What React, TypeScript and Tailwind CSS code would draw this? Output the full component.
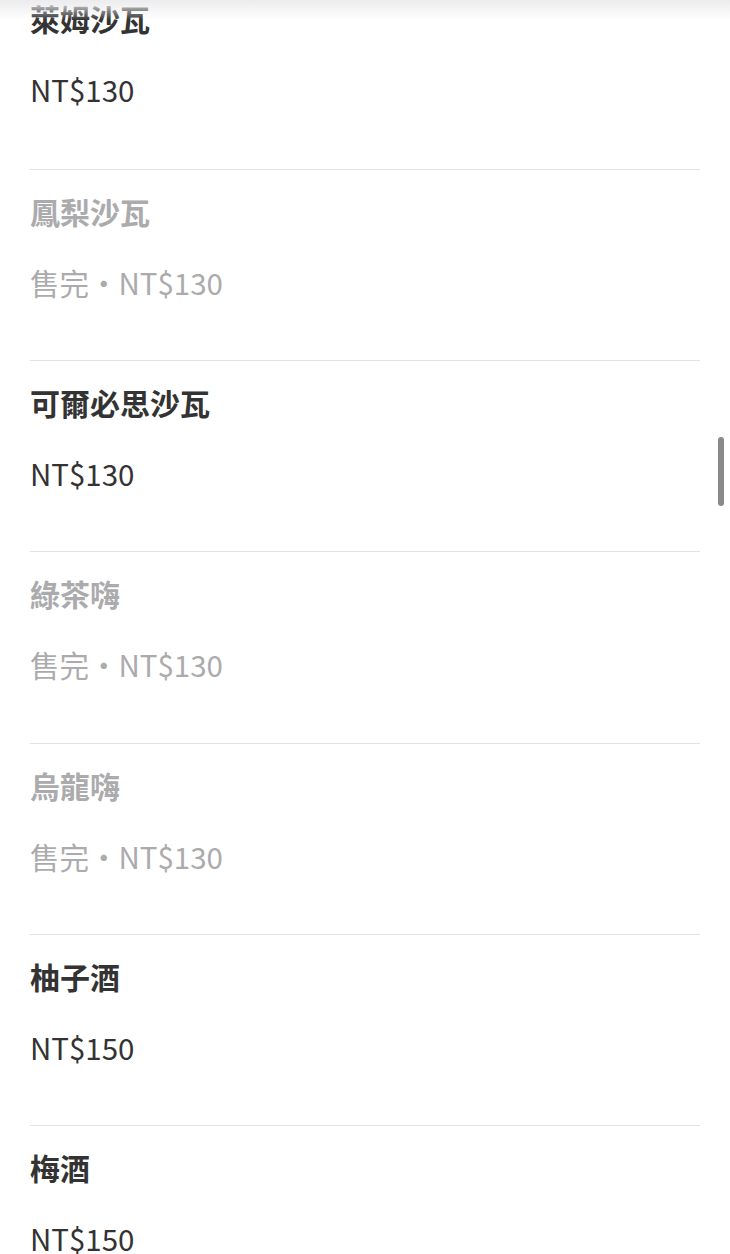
const items = [
  { name: "萊姆沙瓦", price: "NT$130", soldOut: false },
  { name: "鳳梨沙瓦", price: "NT$130", soldOut: true },
  { name: "可爾必思沙瓦", price: "NT$130", soldOut: false },
  { name: "綠茶嗨", price: "NT$130", soldOut: true },
  { name: "烏龍嗨", price: "NT$130", soldOut: true },
  { name: "柚子酒", price: "NT$150", soldOut: false },
  { name: "梅酒", price: "NT$150", soldOut: false },
]

export default function App() {
  return (
    <div className="relative h-[1254px] w-[730px] overflow-hidden bg-white font-['Noto_Sans_CJK_TC','Noto_Sans',sans-serif]">
      {/* shadow left by the header above */}
      <div className="pointer-events-none absolute inset-x-0 top-0 z-10 h-[20px] bg-gradient-to-b from-[#ececee] to-transparent" />

      <ul className="-mt-[2px] px-[30px]">
        {items.map((item, i) => (
          <li
            key={item.name}
            className={`border-b border-[#e2e2e2] ${i === 0 ? "pt-0 pb-[59.5px]" : "pt-[21px] pb-[58.4px]"}`}
          >
            <div
              className={`h-[40px] text-[30px] leading-[40px] font-bold ${item.soldOut ? "text-[#ababad]" : "text-[#333333]"}`}
            >
              {item.name}
            </div>
            <div
              className={`mt-[31px] h-[40px] text-[29.5px] leading-[40px] ${item.soldOut ? "text-[#ababad]" : "text-[#333333]"}`}
            >
              {item.soldOut ? `售完・${item.price}` : item.price}
            </div>
          </li>
        ))}
      </ul>

      {/* scroll thumb */}
      <div className="absolute right-[6px] top-[437px] h-[69px] w-[6px] rounded-full bg-[#8a8a8a]" />
    </div>
  )
}
